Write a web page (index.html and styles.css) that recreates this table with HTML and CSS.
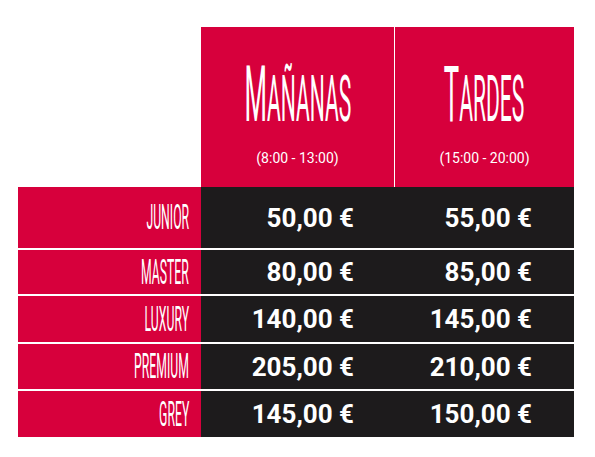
FILE: index.html
```html
<!DOCTYPE html>
<html lang="es">
<head>
<meta charset="utf-8">
<title>Tarifas</title>
<link rel="stylesheet" href="styles.css">
</head>
<body>
<div class="page">
  <div class="pricing">
    <div class="corner"></div>
    <div class="head">
      <h2 class="title"><span class="title-inner">M<span class="sc">añanas</span></span></h2>
      <p class="hours">(8:00 - 13:00)</p>
    </div>
    <div class="head head-sep">
      <h2 class="title"><span class="title-inner">T<span class="sc">ardes</span></span></h2>
      <p class="hours">(15:00 - 20:00)</p>
    </div>

    <div class="label r1"><span class="label-inner">Junior</span></div>
    <div class="price r1">50,00 €</div>
    <div class="price price-b r1">55,00 €</div>

    <div class="label rn"><span class="label-inner">Master</span></div>
    <div class="price rn">80,00 €</div>
    <div class="price price-b rn">85,00 €</div>

    <div class="label rn"><span class="label-inner">Luxury</span></div>
    <div class="price rn">140,00 €</div>
    <div class="price price-b rn">145,00 €</div>

    <div class="label rn"><span class="label-inner">Premium</span></div>
    <div class="price rn">205,00 €</div>
    <div class="price price-b rn">210,00 €</div>

    <div class="label rn"><span class="label-inner">Grey</span></div>
    <div class="price rn">145,00 €</div>
    <div class="price price-b rn">150,00 €</div>
  </div>
</div>
</body>
</html>
```

FILE: styles.css
```css
html, body {
  margin: 0;
  padding: 0;
  background: #ffffff;
}

.page {
  padding: 27px 0 0 18px;
  font-family: Roboto, "Liberation Sans", sans-serif;
}

.pricing {
  display: grid;
  grid-template-columns: 183px 193px 180px;
  grid-template-rows: 160px 61px 46px 48px 47px 48px;
  width: 556px;
}

.head {
  background: #d7003c;
  color: #ffffff;
  display: flex;
  flex-direction: column;
  align-items: center;
  padding-top: 29px;
  box-sizing: border-box;
}

.head-sep {
  border-left: 1px solid #ffffff;
}

.title {
  margin: 0;
  font-weight: 400;
  font-size: 78px;
  line-height: 78px;
  white-space: nowrap;
}

.title-inner {
  display: inline-block;
  transform: scaleX(0.33);
  transform-origin: center;
}

.sc {
  font-size: 64px;
  text-transform: uppercase;
}

.hours {
  margin: 11px 0 0;
  font-size: 14px;
  line-height: 17px;
  font-weight: 400;
}

.label {
  background: #d7003c;
  color: #ffffff;
  display: flex;
  align-items: center;
  justify-content: flex-end;
  padding-right: 12px;
  box-sizing: border-box;
}

.label-inner {
  display: inline-block;
  font-size: 35px;
  line-height: 35px;
  font-weight: 400;
  text-transform: uppercase;
  transform: scaleX(0.35);
  transform-origin: right center;
  white-space: nowrap;
}

.price {
  background: #1d1b1c;
  color: #ffffff;
  display: flex;
  align-items: center;
  justify-content: flex-end;
  padding-right: 40px;
  box-sizing: border-box;
  font-weight: 700;
  font-size: 26px;
  white-space: nowrap;
}

.price-b {
  padding-right: 42px;
}

.rn {
  border-top: 2px solid #ffffff;
}
```
